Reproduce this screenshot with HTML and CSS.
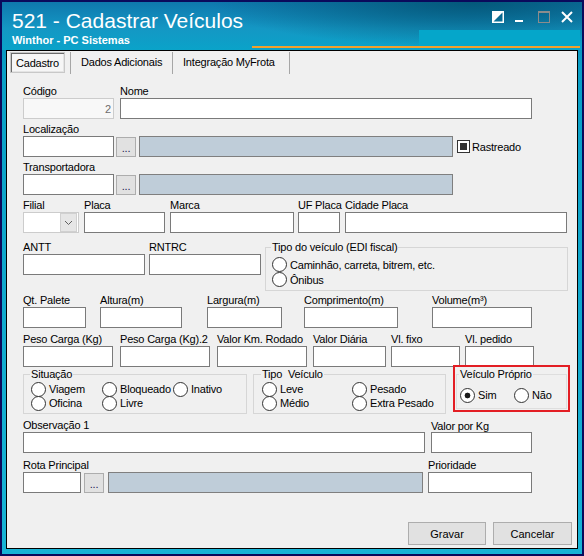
FILE: index.html
```html
<!DOCTYPE html>
<html lang="pt-br">
<head>
    <meta charset="UTF-8">
    <title>521 - Cadastrar Veículos</title>
    <link rel="stylesheet" href="styles.css">
</head>
<body>
    <div class="window">
        <div class="titlebar">
            <div class="title-text">
                <div class="title">521 - Cadastrar Veículos</div>
                <div class="subtitle">Winthor - PC Sistemas</div>
            </div>
            <div class="controls">
                <svg width="12" height="12" viewBox="0 0 12 12"><rect x="0.75" y="0.75" width="10.5" height="10.5" fill="none" stroke="#fff" stroke-width="1.5"/><polygon points="0,0 12,0 0,12" fill="#fff"/></svg>
                <svg width="12" height="12" viewBox="0 0 12 12"><rect x="0" y="9" width="8" height="2" fill="#fff"/></svg>
                <svg width="12" height="12" viewBox="0 0 12 12"><rect x="0.5" y="0.5" width="11" height="11" fill="none" stroke="#8c8c8c"/><rect x="0" y="0" width="12" height="2" fill="#8c8c8c"/></svg>
                <svg width="12" height="12" viewBox="0 0 12 12"><path d="M1 1 L11 11 M11 1 L1 11" stroke="#fff" stroke-width="2"/></svg>
            </div>
        </div>

        <div class="panel">
            <div class="tabs">
                <div class="tab active">Cadastro</div>
                <span class="sep"></span>
                <div class="tab t-dados">Dados Adicionais</div>
                <span class="sep"></span>
                <div class="tab t-frota">Integração MyFrota</div>
                <span class="sep"></span>
            </div>

            <div class="form">
                <div class="row r1">
                    <div class="fld f-codigo"><label>Código</label><input class="in disabled" value="2"></div>
                    <div class="fld f-nome"><label>Nome</label><input class="in"></div>
                </div>

                <div class="row r2">
                    <div class="fld">
                        <label>Localização</label>
                        <div class="ctl">
                            <input class="in code">
                            <span class="dots">...</span>
                            <span class="desc"></span>
                            <span class="check"></span>
                            <span class="check-text">Rastreado</span>
                        </div>
                    </div>
                </div>

                <div class="row r3">
                    <div class="fld">
                        <label>Transportadora</label>
                        <div class="ctl">
                            <input class="in code">
                            <span class="dots">...</span>
                            <span class="desc"></span>
                        </div>
                    </div>
                </div>

                <div class="row r4">
                    <div class="fld f-filial">
                        <label>Filial</label>
                        <div class="combo">
                            <span class="combo-btn"><svg width="7" height="4" viewBox="0 0 7 4"><path d="M0 0 L3.5 3.5 L7 0" fill="none" stroke="#606060"/></svg></span>
                        </div>
                    </div>
                    <div class="fld f-placa"><label>Placa</label><input class="in"></div>
                    <div class="fld f-marca"><label>Marca</label><input class="in"></div>
                    <div class="fld f-uf"><label>UF Placa</label><input class="in"></div>
                    <div class="fld f-cidade"><label>Cidade Placa</label><input class="in"></div>
                </div>

                <div class="row r5">
                    <div class="fld f-antt"><label>ANTT</label><input class="in"></div>
                    <div class="fld f-rntrc"><label>RNTRC</label><input class="in"></div>
                    <fieldset class="grp g-edi">
                        <legend>Tipo do veículo (EDI fiscal)</legend>
                        <div class="radios">
                            <span class="radio">Caminhão, carreta, bitrem, etc.</span>
                            <span class="radio">Ônibus</span>
                        </div>
                    </fieldset>
                </div>

                <div class="row r6">
                    <div class="fld f-qt"><label>Qt. Palete</label><input class="in"></div>
                    <div class="fld f-altura"><label>Altura(m)</label><input class="in"></div>
                    <div class="fld f-largura"><label>Largura(m)</label><input class="in"></div>
                    <div class="fld f-compr"><label>Comprimento(m)</label><input class="in"></div>
                    <div class="fld f-volume"><label>Volume(m³)</label><input class="in"></div>
                </div>

                <div class="row r7">
                    <div class="fld f-peso"><label>Peso Carga (Kg)</label><input class="in"></div>
                    <div class="fld f-peso2"><label>Peso Carga (Kg).2</label><input class="in"></div>
                    <div class="fld f-valkm"><label>Valor Km. Rodado</label><input class="in"></div>
                    <div class="fld f-diaria"><label>Valor Diária</label><input class="in"></div>
                    <div class="fld f-fixo"><label>Vl. fixo</label><input class="in"></div>
                    <div class="fld f-pedido"><label>Vl. pedido</label><input class="in"></div>
                </div>

                <div class="row r8">
                    <fieldset class="grp g-situacao">
                        <legend>Situação</legend>
                        <div class="radios">
                            <span class="radio">Viagem</span>
                            <span class="radio">Bloqueado</span>
                            <span class="radio">Inativo</span>
                            <span class="radio">Oficina</span>
                            <span class="radio">Livre</span>
                        </div>
                    </fieldset>
                    <fieldset class="grp g-tipo">
                        <legend>Tipo&nbsp; Veículo</legend>
                        <div class="radios">
                            <span class="radio">Leve</span>
                            <span class="radio">Pesado</span>
                            <span class="radio">Médio</span>
                            <span class="radio">Extra Pesado</span>
                        </div>
                    </fieldset>
                    <div class="highlight">
                        <fieldset class="grp g-proprio">
                            <legend>Veículo Próprio</legend>
                            <div class="radios">
                                <span class="radio on">Sim</span>
                                <span class="radio">Não</span>
                            </div>
                        </fieldset>
                    </div>
                </div>

                <div class="row r9">
                    <div class="fld f-obs"><label>Observação 1</label><input class="in"></div>
                    <div class="fld f-valkg"><label>Valor por Kg</label><input class="in"></div>
                </div>

                <div class="row r10">
                    <div class="fld">
                        <label>Rota Principal</label>
                        <div class="ctl">
                            <input class="in rota">
                            <span class="dots">...</span>
                            <span class="desc rota-desc"></span>
                        </div>
                    </div>
                    <div class="fld f-prior"><label>Prioridade</label><input class="in"></div>
                </div>

                <div class="actions">
                    <button class="btn">Gravar</button>
                    <button class="btn cancel">Cancelar</button>
                </div>
            </div>
        </div>
    </div>
</body>
</html>
```

FILE: styles.css
```css
* {
    box-sizing: border-box;
}
body {
    margin: 0;
    font-family: "Liberation Sans", Arial, sans-serif;
    font-size: 11px;
    color: #000;
}
.window {
    width: 584px;
    height: 556px;
    border: 2px solid #0a0a5c;
    background: linear-gradient(180deg, #0d7fb0 0%, #0a9fc6 12%, #18b4d6 100%);
}

/* barra de titulo */
.titlebar {
    height: 48px;
    display: flex;
    justify-content: space-between;
    align-items: flex-start;
    background:
        linear-gradient(#f2a12c, #f2a12c) 250px 44px / 328px 2px no-repeat,
        linear-gradient(#05a6ca, #05a6ca) 417px 28px / 161px 16px no-repeat,
        radial-gradient(ellipse 260px 45px at 470px 0, #04587a 0%, rgba(4, 88, 122, 0) 100%),
        linear-gradient(180deg, #0f78ad 0%, #1497c4 55%, #0aa3c9 100%);
}
.title-text {
    padding: 7px 0 0 10px;
    color: #fff;
}
.title {
    font-size: 21px;
    line-height: 24px;
}
.subtitle {
    margin-top: 1px;
    font-weight: bold;
    font-size: 11px;
    line-height: 13px;
}
.controls {
    display: flex;
    gap: 11px;
    padding: 9px 9px 0 0;
}

/* painel */
.panel {
    margin: 0 4px;
    height: 499px;
    border: 1px solid #000;
    background: #f0f0f0;
    letter-spacing: -0.2px;
}
.tabs {
    display: flex;
    height: 22px;
    margin: 1px 0 0 3px;
}
.tab {
    height: 21px;
    line-height: 21px;
    padding-left: 10px;
    white-space: nowrap;
}
.tab.active {
    width: 55px;
    padding: 0;
    margin-right: 5px;
    text-align: center;
    background: #f6f6f6;
    border: 1px solid #c8c8c8;
    box-shadow: inset 1px 1px 0 #6b6b6b, inset -1px -1px 0 #e4e4e4;
}
.t-dados {
    width: 101px;
}
.t-frota {
    width: 116px;
}
.sep {
    width: 1px;
    height: 22px;
    background: #a6a6a6;
}

/* formulario */
.form {
    padding-left: 16px;
}
.row {
    display: flex;
    align-items: flex-start;
}
.r1 { margin-top: 10px; }
.r2, .r3, .r4 { margin-top: 3px; }
.r5 { margin-top: 7px; }
.r6 { margin-top: 2px; }
.r7 { margin-top: 4px; }
.r8 { margin-top: -2px; }
.r9 { margin-top: 4px; }
.r10 { margin-top: 5px; }

.fld {
    display: flex;
    flex-direction: column;
}
.fld > label {
    height: 14px;
    line-height: 14px;
    white-space: nowrap;
}
.in {
    display: block;
    width: 100%;
    height: 21px;
    margin: 0;
    padding: 0 3px;
    border: 1px solid #7a7a7a;
    border-radius: 0;
    background: #fff;
    font: inherit;
    outline: none;
}
.in.disabled {
    border-color: #cccccc;
    background: #f8f8f8;
    color: #6d6d6d;
    text-align: right;
    padding-right: 2px;
}
.ctl {
    display: flex;
    align-items: center;
}
.in.code {
    width: 91px;
}
.in.rota {
    width: 58px;
}
.dots {
    width: 20px;
    height: 20px;
    margin-left: 2px;
    border: 1px solid #adadad;
    background: #e1e1e1;
    line-height: 20px;
    text-align: center;
    color: #1a1a50;
}
.desc {
    width: 314px;
    height: 21px;
    margin-left: 3px;
    border: 1px solid #7f7f7f;
    background: #bfcdd9;
}
.in.rota + .dots {
    margin-left: 3px;
}
.desc.rota-desc {
    width: 315px;
    margin-left: 4px;
}
.check {
    width: 13px;
    height: 13px;
    margin-left: 4px;
    border: 1px solid #333;
    background: linear-gradient(#333, #333) center / 7px 7px no-repeat, #fff;
}
.check-text {
    margin-left: 2px;
}

.combo {
    display: flex;
    justify-content: flex-end;
    align-items: center;
    width: 56px;
    height: 21px;
    padding-right: 1px;
    border: 1px solid #cccccc;
    background: #fff;
}
.combo-btn {
    display: flex;
    align-items: center;
    justify-content: center;
    width: 17px;
    height: 19px;
    border: 1px solid #d0d0d0;
    background: #e6e6e6;
}

.f-codigo { width: 91px; }
.f-nome { width: 412px; margin-left: 6px; }
.f-filial { width: 56px; }
.f-placa { width: 81px; margin-left: 5px; }
.f-marca { width: 124px; margin-left: 5px; }
.f-uf { width: 42px; margin-left: 4px; }
.f-cidade { width: 222px; margin-left: 5px; }
.f-antt { width: 122px; }
.f-rntrc { width: 112px; margin-left: 4px; }
.f-qt { width: 63px; }
.f-altura { width: 82px; margin-left: 14px; }
.f-largura { width: 75px; margin-left: 25px; }
.f-compr { width: 94px; margin-left: 22px; }
.f-volume { width: 100px; margin-left: 34px; }
.f-peso { width: 90px; }
.f-peso2 { width: 90px; margin-left: 7px; }
.f-valkm { width: 90px; margin-left: 7px; }
.f-diaria { width: 73px; margin-left: 6px; }
.f-fixo { width: 69px; margin-left: 5px; }
.f-pedido { width: 69px; margin-left: 5px; }
.f-obs { width: 402px; }
.f-valkg { width: 101px; margin-left: 6px; }
.f-valkg > label { padding-top: 1px; }
.f-prior { width: 104px; margin-left: 5px; }

/* grupos */
.grp {
    margin: 0;
    padding: 0;
    min-width: 0;
    border: 1px solid #d6d6d6;
}
.grp legend {
    height: 14px;
    line-height: 14px;
    padding: 0 1px;
    margin-left: -1px;
    white-space: nowrap;
}
.radios {
    display: grid;
    grid-auto-rows: 14px;
    margin-top: 1px;
}
.radio {
    display: flex;
    align-items: center;
    white-space: nowrap;
}
.radio::before {
    content: "";
    flex: none;
    width: 13px;
    height: 13px;
    margin-right: 3px;
    border: 1px solid #333;
    border-radius: 50%;
    background: #fff;
}
.radio.on::before {
    background: radial-gradient(circle, #1a1a1a 0 2.6px, #fff 3.2px);
}

.g-edi {
    width: 303px;
    height: 51px;
    margin-left: 4px;
    padding-left: 6px;
}
.g-edi .radios {
    grid-auto-rows: 15px;
    margin-top: 3px;
}
.g-situacao {
    width: 224px;
    height: 47px;
    margin-top: 2px;
    padding-left: 7px;
}
.g-situacao .radios {
    grid-template-columns: 71px 71px 71px;
}
.g-tipo {
    width: 193px;
    height: 47px;
    margin: 2px 0 0 6px;
    padding-left: 8px;
}
.g-tipo .radios {
    grid-template-columns: 90px 90px;
}
.highlight {
    width: 117px;
    height: 47px;
    margin-left: 7px;
    padding: 0 1px;
    border: 2px solid #e31e24;
}
.g-proprio {
    height: 42px;
    padding-left: 3px;
    border-color: #dedede;
}
.g-proprio .radios {
    grid-template-columns: 54px 54px;
    margin-top: 7px;
}

/* botoes */
.actions {
    display: flex;
    justify-content: flex-end;
    gap: 7px;
    margin-top: 29px;
    padding-right: 5px;
}
.btn {
    width: 78px;
    height: 23px;
    margin: 0;
    padding: 0;
    border: 1px solid #adadad;
    border-radius: 0;
    background: #e1e1e1;
    font: inherit;
    color: #000;
}
.btn.cancel {
    width: 79px;
}
```
